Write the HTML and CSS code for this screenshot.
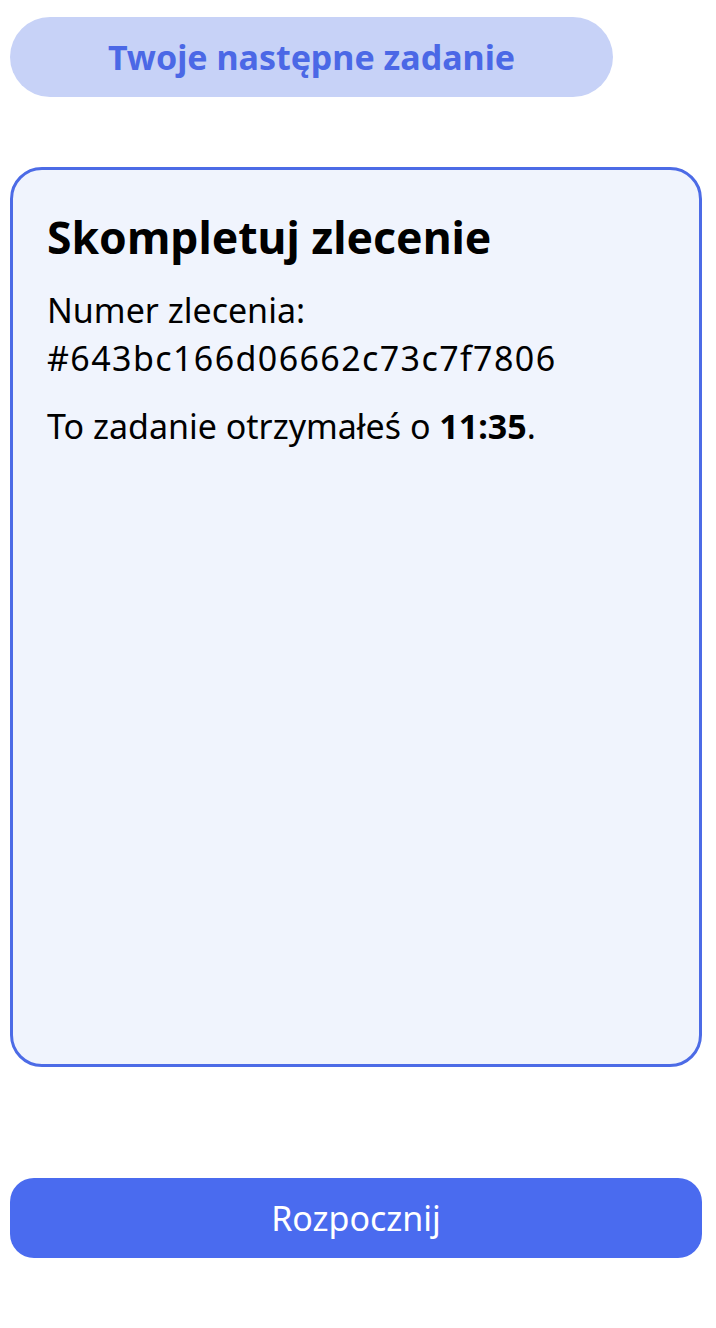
FILE: index.html
```html
<!DOCTYPE html>
<html lang="pl">
<head>
<meta charset="utf-8">
<title>Zadanie</title>
<link rel="stylesheet" href="styles.css">
</head>
<body>
<div class="screen">
  <div class="pill">Twoje następne zadanie</div>
  <section class="card">
    <h1 class="title">Skompletuj zlecenie</h1>
    <p class="text">Numer zlecenia:<br><span class="hash">#643bc166d06662c73c7f7806</span></p>
    <p class="text">To zadanie otrzymałeś o <strong>11:35</strong>.</p>
  </section>
  <button class="start">Rozpocznij</button>
</div>
</body>
</html>
```

FILE: styles.css
```css
html, body {
  margin: 0;
  padding: 0;
  background: #ffffff;
}
body {
  font-family: "Noto Sans", "Open Sans", sans-serif;
  color: #000;
}
.screen {
  padding: 17px 14px 0 10px;
  display: flex;
  flex-direction: column;
}
.pill {
  width: 603px;
  height: 80px;
  border-radius: 40px;
  background: #c7d2f7;
  color: #4b68e6;
  font-weight: 700;
  font-size: 34px;
  display: flex;
  align-items: center;
  justify-content: center;
  box-sizing: border-box;
}
.card {
  margin-top: 70px;
  height: 900px;
  box-sizing: border-box;
  border: 3px solid #4c6be6;
  border-radius: 32px;
  background: #f0f4fd;
  padding: 38px 34px;
}
.title {
  margin: 0 0 20px;
  font-size: 44.5px;
  font-weight: 700;
  line-height: 1.3;
}
.text {
  margin: 0 0 20px;
  font-size: 34px;
  line-height: 48px;
}
.hash {
  letter-spacing: 1.4px;
}
.text strong {
  font-weight: 700;
}
.start {
  margin-top: 111px;
  height: 80px;
  border: none;
  border-radius: 24px;
  background: #4a6bef;
  color: #ffffff;
  font-family: inherit;
  font-size: 34px;
  font-weight: 400;
}
```
